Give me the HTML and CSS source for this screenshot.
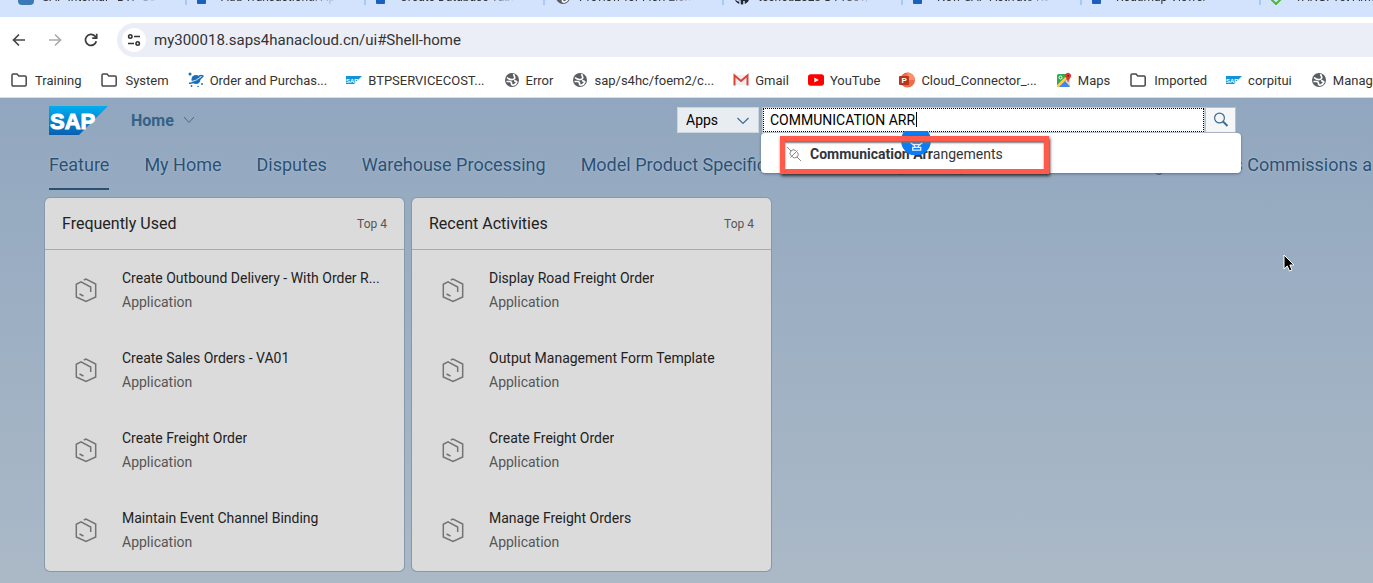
FILE: index.html
```html
<!DOCTYPE html>
<html lang="en">
<head>
<meta charset="utf-8">
<title>Home</title>
<link rel="stylesheet" href="styles.css">
</head>
<body>
<svg class="defs" width="0" height="0" aria-hidden="true">
  <defs>
    <linearGradient id="sapBlue" x1="0" y1="0" x2="0" y2="1"><stop offset="0" stop-color="#00aeef"/><stop offset="1" stop-color="#0a5fb0"/></linearGradient>
    <symbol id="folder" viewBox="0 0 18 16"><path d="M2 3.2Q2 2 3.2 2H7l1.8 2H15q1.200 0 1.200 1.200v7.600q0 1.200-1.200 1.200H3.200Q2 14 2 12.800z" fill="none" stroke="#474747" stroke-width="1.500"/></symbol>
    <symbol id="globe" viewBox="0 0 16 16"><circle cx="8" cy="8" r="7" fill="#5a5e63"/><path d="M3 5.500Q5.500 8 8.500 7.500T10.500 4.500L9.500 2.200M2.500 9.500h3q2 0 2 2t2 1.500Q12 12.500 12.800 10q-.8-1.500-2.800-1" fill="none" stroke="#fff" stroke-width="1.700"/></symbol>
    <symbol id="cube" viewBox="0 0 22 26"><path d="M8.800 3 11 2l9.700 5v13L11 24.500 1.300 20V7.300L6 4.900 15.700 10v5M4.500 17l4 2" fill="none" stroke="#747474" stroke-width="1.500"/></symbol>
    <symbol id="page" viewBox="0 0 16 16"><rect y="1" width="9" height="14" rx="1" fill="#1d5fbf"/></symbol>
  </defs>
</svg>

<div class="tabstrip">
  <div class="tab"><svg class="tab-icon" viewBox="0 0 16 16"><rect width="16" height="16" rx="4" fill="#3b7bb5"/></svg><span class="tab-title">SAP Internal - BTP Se</span><span class="tab-close">✕</span></div>
  <div class="tab"><svg class="tab-icon"><use href="#page"/></svg><span class="tab-title">Add Transactional App</span><span class="tab-close">✕</span></div>
  <div class="tab"><svg class="tab-icon"><use href="#page"/></svg><span class="tab-title">Create Database Tabl</span><span class="tab-close">✕</span></div>
  <div class="tab"><svg class="tab-icon"><use href="#globe"/></svg><span class="tab-title">Preview for Fiori Elem</span><span class="tab-close">✕</span></div>
  <div class="tab"><svg class="tab-icon" viewBox="0 0 16 16"><circle cx="8" cy="8" r="7.500" fill="#222831"/><path d="M6 16v-4q-3 0-4-2M10 16v-4" fill="none" stroke="#d3e3fd" stroke-width="1.500"/></svg><span class="tab-title">teched2023-DT180v/</span><span class="tab-close">✕</span></div>
  <div class="tab"><svg class="tab-icon"><use href="#page"/></svg><span class="tab-title">New SAP Activate Ro</span><span class="tab-close">✕</span></div>
  <div class="tab"><svg class="tab-icon"><use href="#page"/></svg><span class="tab-title">Roadmap Viewer</span><span class="tab-close">✕</span></div>
  <div class="tab"><svg class="tab-icon" viewBox="0 0 16 16"><path d="m1 11 4 4 4-4-4-4z" fill="none" stroke="#4cb837" stroke-width="2"/></svg><span class="tab-title">TANG. Yet Amount</span></div>
</div>

<div class="toolbar">
  <button class="nav-btn" aria-label="Back"><svg width="16" height="16" viewBox="0 0 16 16"><path d="M14 8H3M8 2.500 2.500 8 8 13.500" fill="none" stroke="#474747" stroke-width="1.700"/></svg></button>
  <button class="nav-btn" aria-label="Forward"><svg width="16" height="16" viewBox="0 0 16 16"><path d="M2 8h11M8 2.500 13.500 8 8 13.500" fill="none" stroke="#ababab" stroke-width="1.700"/></svg></button>
  <button class="nav-btn" aria-label="Reload"><svg width="16" height="16" viewBox="0 0 16 16"><path d="M13.300 9.200A5.500 5.500 0 1 1 12 4.200L13.500 6M13.700 1.800v4.400H9.200" fill="none" stroke="#3c3c3c" stroke-width="1.700"/></svg></button>
  <div class="omnibox">
    <button class="site-info" aria-label="Site information"><svg width="14" height="14" viewBox="0 0 14 14"><g fill="none" stroke="#333" stroke-width="1.600"><circle cx="3.300" cy="3.500" r="1.700"/><path d="M7 3.500h6M1 10.500h6"/><circle cx="10.700" cy="10.500" r="1.700"/></g></svg></button>
    <input class="url" type="text" aria-label="Address" value="my300018.saps4hanacloud.cn/ui#Shell-home">
  </div>
</div>

<nav class="bookmarks" aria-label="Bookmarks">
  <a class="bookmark" href="#"><svg class="folder"><use href="#folder"/></svg>Training</a>
  <a class="bookmark" href="#"><svg class="folder"><use href="#folder"/></svg>System</a>
  <a class="bookmark" href="#"><svg viewBox="0 0 16 16"><g fill="#1a6fb8"><circle cx="2" cy="2" r="1.500"/><circle cx="14" cy="12" r="1"/><circle cx="3.500" cy="14" r=".9"/><circle cx="10" cy="14.500" r=".8"/><circle cx="8" cy="7.500" r="4.500"/></g><path d="M1 11Q4 12 9.500 8.500T15 4Q13.500 3 11 4" fill="none" stroke="#1a6fb8" stroke-width="1.500"/><path d="M3.500 9.500Q8 9 12 5.500" fill="none" stroke="#fff" stroke-width=".8"/></svg>Order and Purchas...</a>
  <a class="bookmark" href="#"><svg viewBox="0 0 16 16"><path d="M0 4h16l-8 8H0z" fill="#1393d8"/><text x="0" y="10.500" class="mini-sap">SAP</text></svg>BTPSERVICECOST...</a>
  <a class="bookmark" href="#"><svg><use href="#globe"/></svg>Error</a>
  <a class="bookmark" href="#"><svg><use href="#globe"/></svg>sap/s4hc/foem2/c...</a>
  <a class="bookmark" href="#"><svg viewBox="0 0 16 16"><path d="M2 3h12v10H2z" fill="#eee"/><path d="M1.500 13.500V3.500L8 9l6.500-5.500v10" fill="none" stroke="#db4437" stroke-width="2"/></svg>Gmail</a>
  <a class="bookmark" href="#"><svg viewBox="0 0 16 16"><rect y="2.300" width="16" height="11.500" rx="2.800" fill="#f00"/><path d="m6.300 5.500 4.500 2.500-4.500 2.500z" fill="#fff"/></svg>YouTube</a>
  <a class="bookmark" href="#"><svg viewBox="0 0 16 16"><circle cx="8.500" cy="8" r="7.500" fill="#ed6c47"/><path d="M8.500.5A7.500 7.500 0 0 1 16 8H8.500z" fill="#ff8f6b"/><rect y="4" width="10" height="9" rx="1" fill="#b7351a"/><text x="2.500" y="11" class="mini-p">P</text></svg>Cloud_Connector_...</a>
  <a class="bookmark" href="#"><svg viewBox="0 0 16 16"><rect x="1" y="2" width="13" height="13" rx="1.500" fill="#35a853"/><path d="M8 9 14 15H2z" fill="#4285f4"/><path d="M1.500 14.500 11 5" stroke="#ffd04b" stroke-width="2.500"/><path d="m9 9 5 5.500V6z" fill="#dedede"/><circle cx="4.500" cy="5.500" r="1.500" fill="none" stroke="#fff"/><path d="M12 11Q11.500 8 9.800 5.800A3 3 0 1 1 14.500 5.500Q12.500 8 12 11z" fill="#e03b30"/><circle cx="12.200" cy="3.800" r="1" fill="#811"/></svg>Maps</a>
  <a class="bookmark" href="#"><svg class="folder"><use href="#folder"/></svg>Imported</a>
  <a class="bookmark" href="#"><svg viewBox="0 0 16 16"><path d="M0 4h16l-8 8H0z" fill="#1393d8"/><text x="0" y="10.500" class="mini-sap">SAP</text></svg>corpitui</a>
  <a class="bookmark" href="#"><svg><use href="#globe"/></svg>Manage</a>
</nav>

<div class="shell">
  <header class="shell-header">
    <svg class="logo" viewBox="0 0 59 29" role="img" aria-label="SAP"><path d="M0 0h59L30 29H0z" fill="url(#sapBlue)"/><text x="1" y="23" class="logo-text">SAP</text></svg>
    <button class="home-menu">Home <svg width="12" height="8" viewBox="0 0 12 8"><path d="m1 1 5 5.500L11 1" fill="none" stroke="#45698b"/></svg></button>
    <form class="search">
      <div class="scope">
        <select aria-label="Search scope"><option>Apps</option></select>
        <svg class="scope-arrow" viewBox="0 0 12 8"><path d="m.5 1 5.500 5.500L11.500 1" fill="none" stroke="#3f6a91" stroke-width="1.200"/></svg>
      </div>
      <div class="field"><input type="text" aria-label="Search" value="COMMUNICATION ARR"><span class="caret"></span></div>
      <button class="go" type="button" aria-label="Search"><svg width="16" height="16" viewBox="0 0 16 16"><circle cx="6.500" cy="6" r="4.900" fill="none" stroke="#3f6a91" stroke-width="1.200"/><path d="m10 9.500 4.500 4.500" stroke="#3f6a91" stroke-width="2"/></svg></button>
      <div class="suggestions">
        <a class="suggestion" href="#">
          <svg width="14" height="14" viewBox="0 0 14 14"><g fill="none" stroke="#888"><path d="m0 0 4 4M10 10l4 4M3.500 10.500l7-7"/><path d="M4 4Q6 1.500 8.500 3.500L10.500 5.500Q12.500 8 10 10Q7.500 12 5.500 10L3.500 8Q2 6 4 4z"/></g></svg>
          <span><b>Communication Arr</b>angements</span>
        </a>
        <svg class="badge" viewBox="0 0 30 24"><path d="M3.500 0h23A15 15 0 1 1 3.500 0z" fill="#0a7cf5"/><g fill="none" stroke="#e9f3ff" stroke-width="1.300"><path d="M9.500 11.500 12 13.500h7l2.500-2M12.500 13.500l1.500 2.500M18.500 13.500 17 16M11.700 16.300h8v2.900h-8z"/></g></svg>
        <span class="highlight"></span>
      </div>
    </form>
  </header>

  <nav class="groups" aria-label="Groups">
    <a class="group active" href="#">Feature</a>
    <a class="group" href="#">My Home</a>
    <a class="group" href="#">Disputes</a>
    <a class="group" href="#">Warehouse Processing</a>
    <a class="group" href="#">Model Product Specifications</a>
    <a class="group" href="#">Pricing Management</a>
    <a class="group" href="#">Partner Billing</a>
    <a class="group" href="#">Sales Commissions and Incentives</a>
  </nav>

  <main class="cards">
    <section class="card">
      <div class="card-head"><h2>Frequently Used</h2><span>Top 4</span></div>
      <ul>
        <li><svg><use href="#cube"/></svg><div><p class="title">Create Outbound Delivery - With Order R...</p><p class="kind">Application</p></div></li>
        <li><svg><use href="#cube"/></svg><div><p class="title">Create Sales Orders - VA01</p><p class="kind">Application</p></div></li>
        <li><svg><use href="#cube"/></svg><div><p class="title">Create Freight Order</p><p class="kind">Application</p></div></li>
        <li><svg><use href="#cube"/></svg><div><p class="title">Maintain Event Channel Binding</p><p class="kind">Application</p></div></li>
      </ul>
    </section>
    <section class="card">
      <div class="card-head"><h2>Recent Activities</h2><span>Top 4</span></div>
      <ul>
        <li><svg><use href="#cube"/></svg><div><p class="title">Display Road Freight Order</p><p class="kind">Application</p></div></li>
        <li><svg><use href="#cube"/></svg><div><p class="title">Output Management Form Template</p><p class="kind">Application</p></div></li>
        <li><svg><use href="#cube"/></svg><div><p class="title">Create Freight Order</p><p class="kind">Application</p></div></li>
        <li><svg><use href="#cube"/></svg><div><p class="title">Manage Freight Orders</p><p class="kind">Application</p></div></li>
      </ul>
    </section>
  </main>
</div>
<svg class="pointer" viewBox="0 0 12 19"><path d="M1 1v14l3.300-3 2.200 5 2.500-1-2.200-5H11z" fill="#000" stroke="#fff"/></svg>
</body>
</html>
```
FILE: styles.css
```css
* { box-sizing: border-box; }
html, body { height: 100%; }
body {
  margin: 0;
  display: flex;
  flex-direction: column;
  overflow: hidden;
  background: #fff;
  font-family: Roboto, "Liberation Sans", sans-serif;
  color: #333;
}
a { color: inherit; text-decoration: none; }
button { border: 0; padding: 0; background: none; font: inherit; }
h2, p, ul { margin: 0; padding: 0; font-weight: 400; }
.defs { position: absolute; }

/* browser chrome */
.tabstrip {
  display: flex;
  align-items: flex-end;
  flex: none;
  height: 17px;
  padding-left: 8px;
  overflow: hidden;
  background: #d3e3fd;
}
.tab {
  display: flex;
  align-items: center;
  flex: none;
  position: relative;
  width: 179px;
  height: 41px;
  padding: 0 12px 0 10px;
  font-size: 12px;
}
.tab::after {
  content: "";
  position: absolute;
  right: 0;
  bottom: 12px;
  width: 2px;
  height: 16px;
  background: #a8c7fa;
}
.tab-icon { width: 16px; height: 16px; margin-right: 8px; }
.tab-title {
  flex: 1;
  overflow: hidden;
  white-space: nowrap;
  -webkit-mask-image: linear-gradient(90deg, #000 75%, transparent);
  mask-image: linear-gradient(90deg, #000 75%, transparent);
}
.tab-close { margin-left: 8px; }
.toolbar {
  display: flex;
  align-items: center;
  flex: none;
  height: 46px;
  padding-left: 11px;
  gap: 20px;
  background: #fff;
}
.nav-btn { display: flex; width: 16px; height: 16px; }
.omnibox {
  display: flex;
  align-items: center;
  flex: 1;
  height: 34px;
  margin-left: -2px;
  padding-left: 5px;
  gap: 8px;
  border-radius: 17px 0 0 17px;
  background: #ebeef7;
}
.site-info {
  display: flex;
  align-items: center;
  justify-content: center;
  width: 24px;
  height: 24px;
  border-radius: 50%;
  background: #fff;
}
.url {
  flex: 1;
  padding: 0;
  border: 0;
  background: none;
  font: 15px Roboto, sans-serif;
  color: #333;
}
.bookmarks {
  display: flex;
  align-items: center;
  flex: none;
  height: 34px;
  padding-left: 10px;
  gap: 19px;
  overflow: hidden;
  white-space: nowrap;
  font-size: 13px;
}
.bookmark { display: flex; align-items: center; gap: 6px; flex: none; }
.bookmark svg { width: 16px; height: 16px; }
.bookmark .folder { width: 18px; margin-right: 1px; }
.mini-sap { font: bold 6px "Liberation Sans", sans-serif; fill: #fff; }
.mini-p { font: bold 8px "Liberation Sans", sans-serif; fill: #fff; }

/* launchpad */
.shell {
  flex: 1;
  border-top: 1px solid #d8dde2;
  background: linear-gradient(#91a7bf, #abb9c7);
}
.shell-header { display: flex; align-items: center; height: 44px; padding-left: 49px; }
.logo { width: 59px; height: 29px; }
.logo-text { font: bold 22px "Liberation Sans", sans-serif; fill: #fff; stroke: #fff; }
.home-menu {
  display: flex;
  align-items: center;
  gap: 9px;
  margin-left: 23px;
  font-size: 16px;
  font-weight: 700;
  color: #346187;
}
.search { display: flex; position: relative; width: 559px; height: 26px; margin: 0 137px 0 auto; }
.scope { position: relative; width: 82px; margin-right: 3px; }
.scope select {
  appearance: none;
  width: 100%;
  height: 100%;
  padding: 0 8px;
  border: 1px solid #ccd4dc;
  border-radius: 0;
  background: #e8edf2;
  font: 14px Roboto, sans-serif;
  color: #000;
}
.scope-arrow { position: absolute; right: 10px; top: 10px; width: 12px; height: 8px; }
.field { position: relative; flex: 1; border: 1px solid #c5cdd5; background: #fff; }
.field input {
  display: block;
  width: 100%;
  height: 100%;
  padding: 0 6px;
  border: 1px dotted #000;
  outline: 0;
  background: #fff;
  font: 14px Roboto, sans-serif;
  color: #000;
}
.caret { position: absolute; left: 153px; top: 4px; width: 1px; height: 15px; background: #000; }
.go {
  display: flex;
  align-items: center;
  justify-content: center;
  width: 31px;
  border: 1px solid #b9c0c7;
  background: #f5f6f7;
}
.suggestions {
  position: absolute;
  z-index: 2;
  top: 100%;
  left: 84px;
  width: 480px;
  height: 40px;
  border-radius: 4px;
  background: #fff;
  box-shadow: 0 1px 3px #5c718a;
}
.suggestion {
  display: flex;
  align-items: center;
  height: 42px;
  padding-left: 26px;
  gap: 9px;
  font-size: 14px;
  color: #32363a;
}
.badge { position: absolute; left: 140px; top: -2px; width: 30px; height: 24px; }
.highlight {
  position: absolute;
  left: 19px;
  top: 3px;
  width: 269px;
  height: 38px;
  border: 5px solid #ff5a4c;
  box-shadow: 1px 2px 3px #333, inset 0 2px 2px #777;
}
.groups {
  display: flex;
  gap: 35px;
  height: 48px;
  padding-left: 49px;
  overflow: hidden;
  white-space: nowrap;
  font-size: 18px;
  line-height: 46px;
  color: #2a5175;
  text-shadow: 0 0 2px #b9c9d9;
}
.group { flex: none; }
.active { border-bottom: 2px solid #2a5175; }
.cards { display: flex; gap: 8px; margin-top: 8px; padding-left: 45px; }
.card {
  width: 359px;
  border-radius: 5px;
  background: #dbdbdb;
  box-shadow: 0 0 0 1px #8498ae;
}
.card-head {
  display: flex;
  align-items: center;
  justify-content: space-between;
  height: 52px;
  padding: 0 17px;
  border-bottom: 1px solid #aaa;
  color: #555;
  font-size: 12px;
}
.card-head h2 { font-size: 16px; color: #222; }
.card li { display: flex; align-items: center; height: 80px; padding: 0 17px 0 30px; }
.card ul { padding-bottom: 1px; list-style: none; }
.card li svg { flex: none; width: 22px; height: 26px; margin-right: 25px; }
.card li div { min-width: 0; }
.card p { overflow: hidden; white-space: nowrap; text-overflow: ellipsis; font-size: 14px; line-height: 24px; }
.title { color: #222; }
.kind { color: #555; }
.pointer { position: absolute; left: 1283px; top: 254px; width: 12px; height: 19px; }
```
